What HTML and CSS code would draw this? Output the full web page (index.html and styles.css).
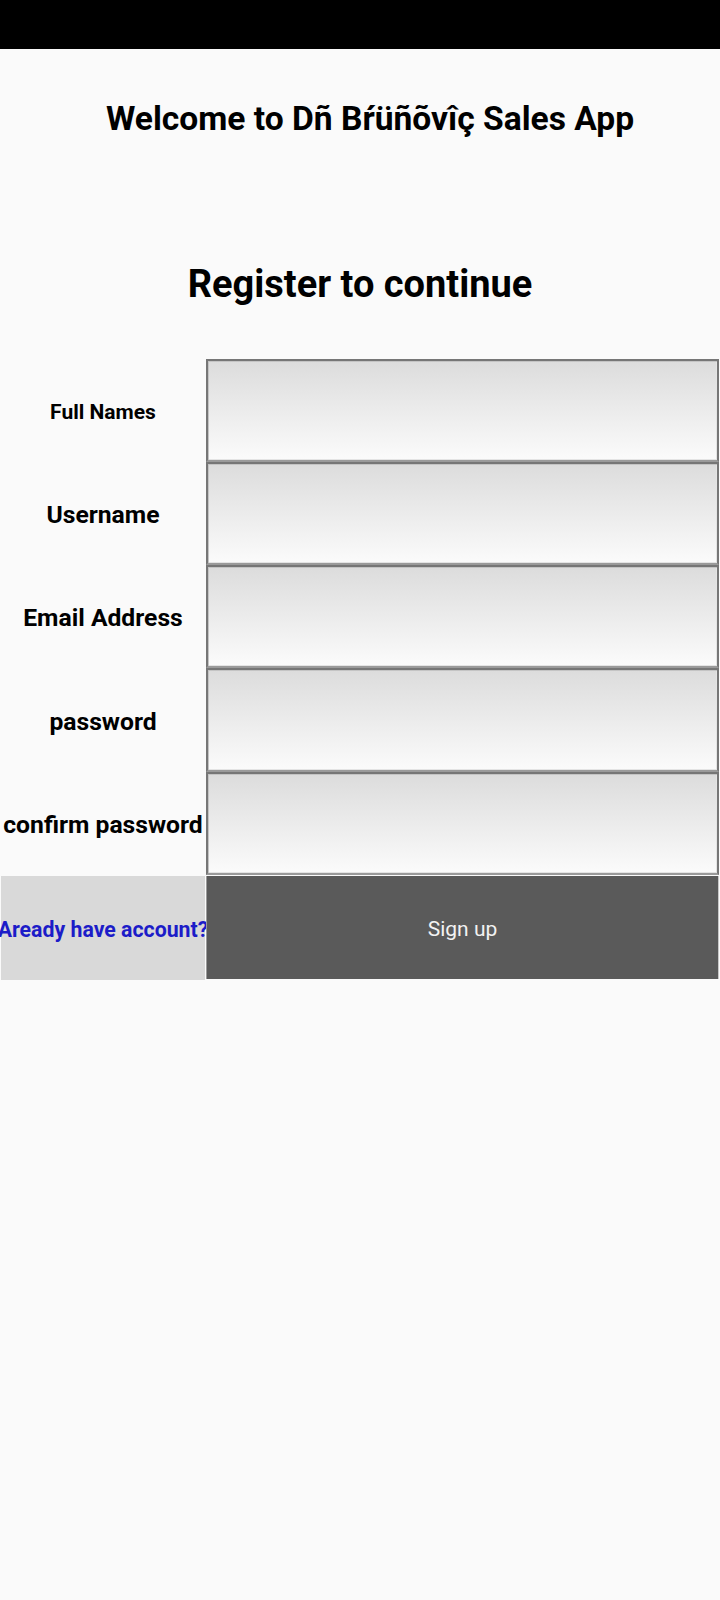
FILE: index.html
```html
<!DOCTYPE html>
<html lang="en">
<head>
<meta charset="utf-8">
<title>Register</title>
<link rel="stylesheet" href="styles.css">
</head>
<body>
<div class="statusbar"></div>
<main class="page">
  <h1 class="title">Welcome to Dñ Bŕüñõvîç Sales App</h1>
  <h2 class="subtitle">Register to continue</h2>
  <form class="form">
    <label class="label small">Full Names</label>
    <div class="field"></div>
    <label class="label">Username</label>
    <div class="field"></div>
    <label class="label">Email Address</label>
    <div class="field"></div>
    <label class="label">password</label>
    <div class="field"></div>
    <label class="label">confirm password</label>
    <div class="field"></div>
    <div class="login"><span>Aready have account?</span></div>
    <div class="signup">Sign up</div>
  </form>
</main>
</body>
</html>
```
FILE: styles.css
```css
html, body {
  margin: 0;
  padding: 0;
}
body {
  width: 720px;
  min-height: 1600px;
  background: #fafafa;
  font-family: Roboto, "Liberation Sans", sans-serif;
  color: #000;
}
.statusbar {
  height: 49px;
  background: #000;
}
.page {
  display: flex;
  flex-direction: column;
}
.title {
  margin: 51px 0 0 0;
  padding-left: 20px;
  font-size: 33.6px;
  line-height: 38px;
  font-weight: 700;
  text-align: center;
}
.subtitle {
  margin: 121px 0 0 0;
  font-size: 38px;
  line-height: 50px;
  font-weight: 700;
  text-align: center;
}
.form {
  margin-top: 50px;
  display: grid;
  grid-template-columns: 206px 514px;
  grid-template-rows: 103px 103px 103px 104px 103px 105px;
}
.label {
  display: flex;
  align-items: center;
  justify-content: center;
  font-size: 24.7px;
  font-weight: 700;
  white-space: nowrap;
  padding-top: 2px;
}
.label.small {
  font-size: 21px;
}
.field {
  box-sizing: border-box;
  border: 2px solid #767676;
  border-bottom-color: #9a9a9a;
  margin-right: 1px;
  box-shadow: inset 1px 1px 0 #c4c4c4, inset -1px -1px 0 #e4e4e4;
  background: linear-gradient(#dcdcdc, #fbfbfb);
}
.login {
  margin: 1px 1px 0 1px;
  background: #d9d9d9;
  display: flex;
  align-items: center;
  justify-content: center;
  overflow: visible;
}
.login span {
  white-space: nowrap;
  color: #1c1cc8;
  font-size: 21.3px;
  font-weight: 700;
  padding-top: 2px;
}
.signup {
  margin: 1px 1px 1px 0;
  background: #5a5a5a;
  border-left: 1px solid #9a9a9a;
  border-right: 1px solid #c8c8c8;
  color: #f2f2f2;
  font-size: 21px;
  padding-top: 2px;
  display: flex;
  align-items: center;
  justify-content: center;
}
```
